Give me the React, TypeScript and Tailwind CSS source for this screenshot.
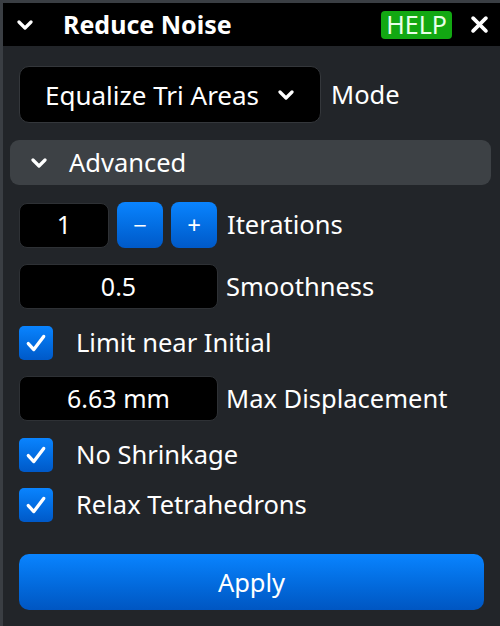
import React from 'react';

const font = { fontFamily: '"Noto Sans", "Open Sans", sans-serif' };

function Chevron({ className }: { className?: string }) {
  return (
    <svg viewBox="0 0 16 10" className={className} fill="none">
      <path d="M2 2l6 6 6-6" stroke="white" strokeWidth="3.2" strokeLinecap="round" strokeLinejoin="round" />
    </svg>
  );
}

function Check() {
  return (
    <div className="w-[34px] h-[34px] rounded-[5px] bg-gradient-to-b from-[#0a84ff] to-[#0059c8] flex items-center justify-center">
      <svg viewBox="0 0 20 20" className="w-[22px] h-[22px]" fill="none">
        <path d="M3 10.5l5 5.5 9-12" stroke="white" strokeWidth="3" strokeLinecap="round" strokeLinejoin="round" />
      </svg>
    </div>
  );
}

function Field({ value, w }: { value: string; w: string }) {
  return (
    <div className={`${w} h-[45px] bg-black rounded-[8px] border border-[#2e3135] flex items-center justify-center text-white text-[25px]`}>
      {value}
    </div>
  );
}

function StepBtn({ children }: { children: React.ReactNode }) {
  return (
    <div className="w-[46px] h-[46px] rounded-[8px] bg-gradient-to-b from-[#0a84ff] to-[#0059c8] flex items-center justify-center text-white text-[24px]">
      {children}
    </div>
  );
}

export default function App() {
  return (
    <div style={font} className="w-[500px] h-[626px] bg-[#222529] border-t-[3px] border-l-[3px] border-[#3a3e43] flex flex-col text-white overflow-hidden">
      <div className="h-[43px] bg-black flex items-center pl-[14px] pr-[12px]">
        <Chevron className="w-[16px] h-[10px]" />
        <span className="ml-[30px] text-[25px] font-bold leading-none">Reduce Noise</span>
        <span className="ml-auto bg-[#12a812] rounded-[4px] px-[5px] h-[28px] flex items-center text-[25px] leading-none text-[#e8ffe8]">HELP</span>
        <svg viewBox="0 0 16 16" className="ml-[19px] w-[17px] h-[17px]" fill="none">
          <path d="M2 2l12 12M14 2L2 14" stroke="white" strokeWidth="3.4" strokeLinecap="round" />
        </svg>
      </div>

      <div className="flex flex-col pl-[16px] pr-[16px] pt-[20px]">
        <div className="flex items-center gap-[10px]">
          <div className="w-[302px] h-[57px] bg-black rounded-[10px] border border-[#34373b] flex items-center pl-[25px] pr-[26px]">
            <span className="text-[26px] leading-none">Equalize Tri Areas</span>
            <Chevron className="ml-auto w-[16px] h-[10px]" />
          </div>
          <span className="text-[25.5px] leading-none">Mode</span>
        </div>

        <div className="mt-[17px] -ml-[9px] -mr-[7px] h-[45px] bg-[#3d4145] rounded-[9px] flex items-center pl-[21px]">
          <Chevron className="w-[16px] h-[10px]" />
          <span className="ml-[22px] text-[25.5px] leading-none">Advanced</span>
        </div>

        <div className="mt-[17px] flex items-center">
          <Field value="1" w="w-[90px]" />
          <div className="ml-[8px] flex gap-[8px]">
            <StepBtn>−</StepBtn>
            <StepBtn>+</StepBtn>
          </div>
          <span className="ml-[10px] text-[25.5px] leading-none">Iterations</span>
        </div>

        <div className="mt-[16px] flex items-center">
          <Field value="0.5" w="w-[199px]" />
          <span className="ml-[8px] text-[25.5px] leading-none">Smoothness</span>
        </div>

        <div className="mt-[17px] flex items-center">
          <Check />
          <span className="ml-[23px] text-[25.5px] leading-none">Limit near Initial</span>
        </div>

        <div className="mt-[16px] flex items-center">
          <Field value="6.63 mm" w="w-[199px]" />
          <span className="ml-[8px] text-[25.5px] leading-none">Max Displacement</span>
        </div>

        <div className="mt-[17px] flex items-center">
          <Check />
          <span className="ml-[23px] text-[25.5px] leading-none">No Shrinkage</span>
        </div>

        <div className="mt-[16px] flex items-center">
          <Check />
          <span className="ml-[23px] text-[25.5px] leading-none">Relax Tetrahedrons</span>
        </div>

        <div className="mt-[32px] h-[56px] rounded-[10px] bg-gradient-to-b from-[#0a84ff] to-[#0056c2] flex items-center justify-center text-[25.5px]">
          Apply
        </div>
      </div>
    </div>
  );
}
